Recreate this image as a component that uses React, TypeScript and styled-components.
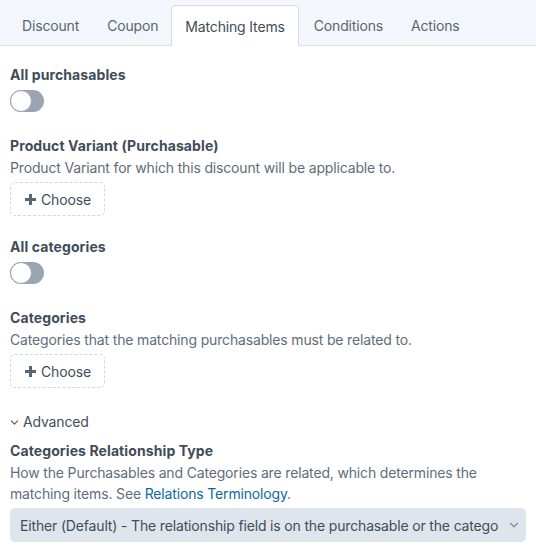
import React from "react";
import styled, { createGlobalStyle } from "styled-components";

const Global = createGlobalStyle`
  html, body { margin: 0; padding: 0; background: #ffffff; }
  body {
    font-family: Inter, "Liberation Sans", Arial, sans-serif;
    font-size: 14px;
    letter-spacing: -0.16px;
    color: #3f4d5a;
    -webkit-font-smoothing: antialiased;
  }
`;

const Page = styled.div`
  width: 536px;
  height: 550px;
  overflow: hidden;
  background: #ffffff;
`;

const TabBar = styled.div`
  display: flex;
  align-items: flex-end;
  height: 45px;
  padding-left: 7px;
  background: #f3f7fc;
  border-bottom: 1px solid #d8e0e8;
  box-sizing: content-box;
`;

const Tab = styled.div<{ $active?: boolean }>`
  display: flex;
  align-items: center;
  padding: 0 ${(p) => (p.$active ? "13px" : "12px")} 0 ${(p) => (p.$active ? "13px" : "14px")};
  margin-bottom: ${(p) => (p.$active ? "-1px" : "0")};
  height: ${(p) => (p.$active ? "41px" : "40px")};
  box-sizing: border-box;
  font-size: 14px;
  color: ${(p) => (p.$active ? "#3f4d5a" : "#596673")};
  background: ${(p) => (p.$active ? "#ffffff" : "transparent")};
  border: ${(p) => (p.$active ? "1px solid #d3dce6" : "1px solid transparent")};
  border-bottom: none;
  border-radius: 5px 5px 0 0;
  white-space: nowrap;
`;

const Content = styled.div`
  padding: 19px 10px 0 10px;
`;

const Field = styled.div<{ $gap?: number }>`
  margin-bottom: ${(p) => p.$gap ?? 24}px;
`;

const Label = styled.div`
  font-weight: 700;
  font-size: 14px;
  line-height: 20px;
  letter-spacing: 0.1px;
  color: #3f4d5a;
`;

const Instructions = styled.div`
  font-size: 14px;
  line-height: 21px;
  color: #606d7b;
  margin-top: 1px;
`;

const Link = styled.a`
  color: #0b69a3;
  text-decoration: none;
`;

const Toggle = styled.div`
  margin-top: 5px;
  width: 34px;
  height: 22px;
  border-radius: 11px;
  background: #9aa5b1;
  position: relative;
  box-sizing: border-box;
  &::after {
    content: "";
    position: absolute;
    left: 0;
    top: 0;
    width: 22px;
    height: 22px;
    border-radius: 50%;
    background: #ffffff;
    border: 1px solid #9aa5b1;
    box-sizing: border-box;
  }
`;

const ChooseButton = styled.button`
  margin-top: 4px;
  display: flex;
  align-items: center;
  gap: 5px;
  height: 34px;
  padding: 0 13px 0 14px;
  background: transparent;
  border: 1px dashed #cdd8e4;
  border-radius: 5px;
  font-family: inherit;
  font-size: 14px;
  letter-spacing: -0.16px;
  color: #3f4d5a;
`;

const Disclosure = styled.div`
  display: flex;
  align-items: center;
  gap: 4px;
  height: 20px;
  line-height: 20px;
  font-size: 14px;
  color: #3f4d5a;
  margin-bottom: 9px;
`;

const Select = styled.div`
  margin-top: 4px;
  height: 34px;
  border-radius: 5px;
  background: #dfe5ec;
  display: flex;
  align-items: center;
  padding: 0 7px 0 10px;
  gap: 10px;
  color: #3f4d5a;
  font-size: 14px;
`;

const SelectText = styled.span`
  flex: 1;
  white-space: nowrap;
  overflow: hidden;
`;

const Plus = () => (
  <svg width="11" height="11" viewBox="0 0 11 11">
    <rect x="4" y="0" width="3" height="11" fill="#596673" />
    <rect x="0" y="4" width="11" height="3" fill="#596673" />
  </svg>
);

const Chevron = ({ color = "#596673", size = 9 }: { color?: string; size?: number }) => (
  <svg width={size} height={size} viewBox="0 0 10 10">
    <path d="M1.5 3.2 L5 6.7 L8.5 3.2" fill="none" stroke={color} strokeWidth="1.5" strokeLinecap="round" strokeLinejoin="round" />
  </svg>
);

const tabs = ["Discount", "Coupon", "Matching Items", "Conditions", "Actions"];

export default function App() {
  return (
    <Page>
      <Global />
      <TabBar>
        {tabs.map((t) => (
          <Tab key={t} $active={t === "Matching Items"}>
            {t}
          </Tab>
        ))}
      </TabBar>
      <Content>
        <Field>
          <Label>All purchasables</Label>
          <Toggle />
        </Field>
        <Field $gap={21}>
          <Label>Product Variant (Purchasable)</Label>
          <Instructions>Product Variant for which this discount will be applicable to.</Instructions>
          <ChooseButton>
            <Plus />
            Choose
          </ChooseButton>
        </Field>
        <Field>
          <Label>All categories</Label>
          <Toggle />
        </Field>
        <Field $gap={24}>
          <Label>Categories</Label>
          <Instructions>Categories that the matching purchasables must be related to.</Instructions>
          <ChooseButton>
            <Plus />
            Choose
          </ChooseButton>
        </Field>
        <Disclosure>
          <Chevron color="#606d7b" size={9} />
          Advanced
        </Disclosure>
        <Field>
          <Label>Categories Relationship Type</Label>
          <Instructions>
            How the Purchasables and Categories are related, which determines the matching items. See{" "}
            <Link href="#">Relations Terminology</Link>.
          </Instructions>
          <Select>
            <SelectText>Either (Default) - The relationship field is on the purchasable or the category</SelectText>
            <Chevron color="#8a96a3" size={10} />
          </Select>
        </Field>
      </Content>
    </Page>
  );
}
